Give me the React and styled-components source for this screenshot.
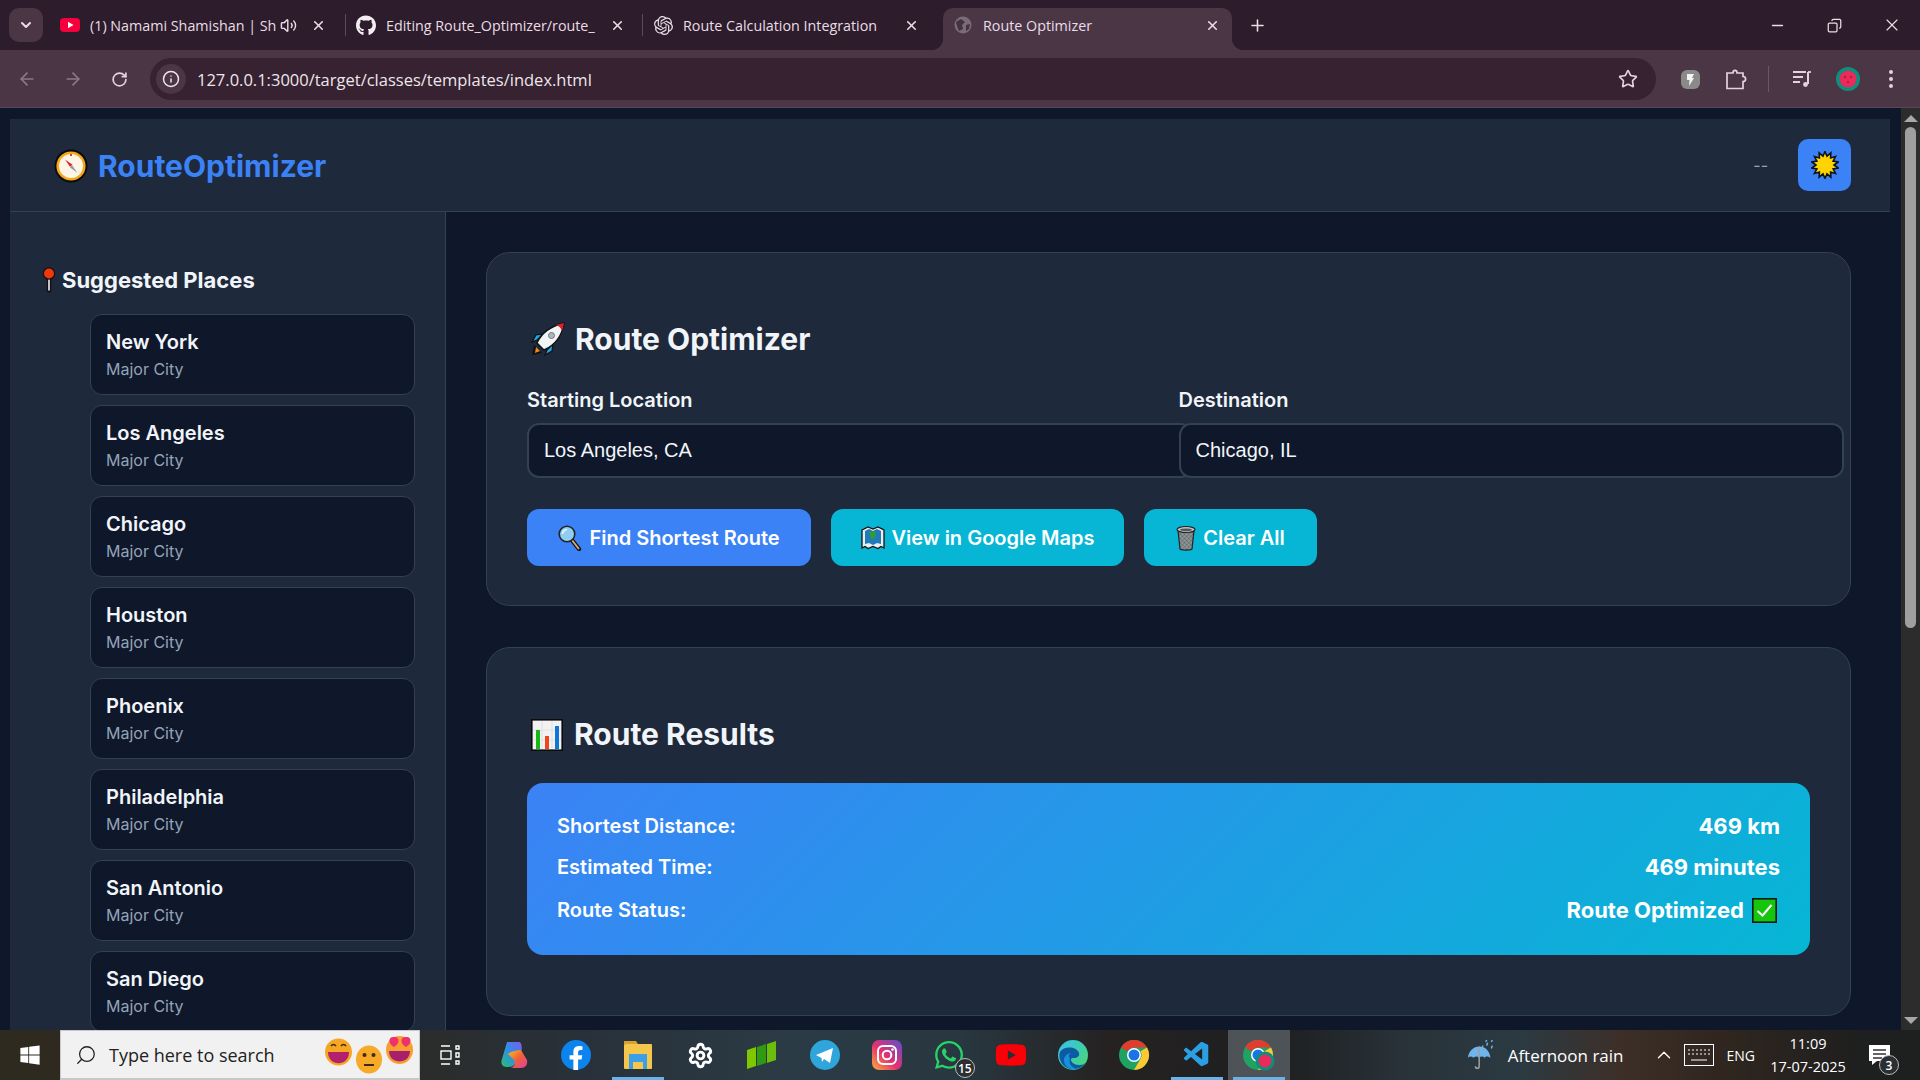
import React from 'react';
import styled, { createGlobalStyle } from 'styled-components';
import { ArrowLeft, ArrowRight, RotateCw, Info, Star, X, Plus, Minus, Copy, ChevronDown, ChevronUp, Volume2, Search, Settings } from 'lucide-react';
import { FaGithub, FaFacebookF, FaWhatsapp, FaWindows, FaYoutube } from 'react-icons/fa';
import { SiOpenai } from 'react-icons/si';
import { VscVscode } from 'react-icons/vsc';

const GlobalStyle = createGlobalStyle`
  * { box-sizing: border-box; }
  html, body { margin: 0; padding: 0; overflow: hidden; background: #0f172a; }
  body { font-family: Inter, "Liberation Sans", sans-serif; }
`;

const Shell = styled.div`
  width: 1920px;
  height: 1080px;
  display: flex;
  flex-direction: column;
  overflow: hidden;
`;

/* browser chrome */
const TabStrip = styled.div`
  height: 50px;
  background: #2d1c2b;
  display: flex;
  align-items: flex-end;
  padding-left: 9px;
  color: #e9dde6;
  font-family: "Open Sans", "Noto Sans", sans-serif;
  font-size: 14.3px;
`;

const TabMenu = styled.div`
  width: 34px;
  height: 34px;
  margin-bottom: 8px;
  margin-right: 7px;
  border-radius: 10px;
  background: #4b3646;
  display: flex;
  align-items: center;
  justify-content: center;
`;

const Tab = styled.div`
  width: ${p => p.$w}px;
  height: 42px;
  display: flex;
  align-items: center;
  padding: 0 ${p => p.$pr}px 8px 10px;
  position: relative;
  flex-shrink: 0;
  border-radius: 10px 10px 0 0;
  background: ${p => (p.$active ? '#4b3646' : 'transparent')};
  ${p => p.$sep && `
    &::after {
      content: '';
      position: absolute;
      right: 0;
      top: 6px;
      height: 22px;
      width: 1px;
      background: #5d4a59;
    }
  `}
  ${p => p.$active && `
    &::before, &::after {
      content: '';
      position: absolute;
      bottom: 0;
      width: 12px;
      height: 12px;
    }
    &::before { left: -12px; background: radial-gradient(circle at 0 0, transparent 12px, #4b3646 12.5px); }
    &::after { right: -12px; background: radial-gradient(circle at 100% 0, transparent 12px, #4b3646 12.5px); }
  `}
`;

const TabIcon = styled.span`
  width: 20px;
  height: 20px;
  margin-right: 10px;
  flex-shrink: 0;
  display: flex;
  align-items: center;
  justify-content: center;
`;

const TabTitle = styled.span`
  flex: 1;
  white-space: nowrap;
  min-width: 0;
`;

const TabAudio = styled(Volume2)`
  margin-left: 4px;
  flex-shrink: 0;
`;

const TabClose = styled(X)`
  margin-left: 14px;
  flex-shrink: 0;
`;

const NewTab = styled.div`
  margin: 0 0 8px 16px;
  height: 34px;
  display: flex;
  align-items: center;
`;

const WindowControls = styled.div`
  margin-left: auto;
  height: 50px;
  display: flex;
  align-items: center;
`;

const WinButton = styled.div`
  width: 57px;
  display: flex;
  justify-content: center;
`;

const RestoreIcon = styled(Copy)`
  transform: scaleX(-1);
`;

const Toolbar = styled.div`
  height: 58px;
  background: #4b3646;
  display: flex;
  align-items: center;
  padding-left: 4px;
  color: #bfb0bb;
  box-shadow: inset 0 -1px 0 #5a4654;
`;

const NavButton = styled.div`
  width: 46px;
  display: flex;
  justify-content: center;
  opacity: ${p => (p.$dim ? 0.55 : 1)};
  color: ${p => (p.$dim ? 'inherit' : '#e3d3de')};
`;

const Omnibox = styled.div`
  width: 1506px;
  height: 42px;
  flex-shrink: 0;
  margin-left: 8px;
  border-radius: 21px;
  background: #362230;
  display: flex;
  align-items: center;
  padding: 0 18px 0 6px;
  color: #efe6ec;
  font-family: "Open Sans", "Noto Sans", sans-serif;
  font-size: 16.5px;
`;

const InfoBubble = styled.div`
  width: 30px;
  height: 30px;
  border-radius: 50%;
  background: #4b3646;
  margin-right: 11px;
  display: flex;
  align-items: center;
  justify-content: center;
`;

const Url = styled.span`
  flex: 1;
`;

const ToolbarIcons = styled.div`
  display: flex;
  align-items: center;
  color: #e3d3de;
`;

const ToolSlot = styled.div`
  width: ${p => p.$w}px;
  display: flex;
  justify-content: center;
  flex-shrink: 0;
`;

const ToolDivider = styled.div`
  width: 1px;
  height: 26px;
  background: #6a5865;
`;

/* page */
const Viewport = styled.div`
  flex: 1;
  min-height: 0;
  display: flex;
`;

const Page = styled.div`
  width: 1901px;
  padding: 11px 11px 0 10px;
  background: #0f172a;
  display: flex;
  flex-direction: column;
  overflow: hidden;
`;

const Scrollbar = styled.div`
  width: 19px;
  background: #2c2c2c;
  display: flex;
  flex-direction: column;
  align-items: center;
  padding-top: 7px;
`;

const ScrollUp = styled.div`
  width: 0;
  height: 0;
  border-left: 7px solid transparent;
  border-right: 7px solid transparent;
  border-bottom: 7px solid #a8a8a8;
`;

const ScrollDown = styled(ScrollUp)`
  margin-top: auto;
  margin-bottom: 6px;
  border-bottom: 0;
  border-top: 7px solid #a8a8a8;
`;

const ScrollThumb = styled.div`
  width: 11px;
  height: 501px;
  margin-top: 5px;
  border-radius: 6px;
  background: #9f9f9f;
`;

const Header = styled.header`
  height: 93px;
  flex-shrink: 0;
  background: #1e293b;
  border-bottom: 1px solid #334155;
  display: flex;
  align-items: center;
  padding: 0 39px 0 44px;
`;

const Logo = styled.h1`
  margin: 0;
  padding-top: 2px;
  font-size: 30px;
  font-weight: 700;
  color: #3b82f6;
  display: flex;
  align-items: center;
  gap: 10px;
`;

const HeaderRight = styled.div`
  margin-left: auto;
  display: flex;
  align-items: center;
  gap: 30px;
`;

const Ping = styled.span`
  color: #94a3b8;
  font-size: 16px;
`;

const ThemeToggle = styled.button`
  width: 53px;
  height: 52px;
  border: 0;
  border-radius: 10px;
  background: #3b82f6;
  display: flex;
  align-items: center;
  justify-content: center;
  padding: 0;
`;

const Layout = styled.div`
  flex: 1;
  min-height: 0;
  display: flex;
`;

const Sidebar = styled.aside`
  width: 436px;
  flex-shrink: 0;
  background: #1e293b;
  border-right: 1px solid #334155;
  padding: 51px 30px 0 32px;
`;

const SideTitle = styled.h3`
  margin: 0 0 17px;
  font-size: 22px;
  line-height: 34px;
  font-weight: 700;
  color: #f1f5f9;
  display: flex;
  align-items: center;
  gap: 6px;
`;

const PlaceList = styled.ul`
  list-style: none;
  margin: 0;
  padding: 0 0 0 48px;
  display: flex;
  flex-direction: column;
  gap: 10px;
`;

const PlaceCard = styled.li`
  height: 81px;
  padding: 15px;
  border: 1px solid #334155;
  border-radius: 12px;
  background: #0f172a;
`;

const PlaceName = styled.div`
  font-size: 20px;
  line-height: 24px;
  font-weight: 600;
  color: #f1f5f9;
`;

const PlaceKind = styled.div`
  margin-top: 5px;
  font-size: 16px;
  line-height: 20px;
  color: #94a3b8;
`;

const Main = styled.main`
  flex: 1;
  min-width: 0;
  padding: 40px 39px 0 40px;
  display: flex;
  flex-direction: column;
  gap: 41px;
`;

const Card = styled.section`
  flex-shrink: 0;
  height: ${p => p.$h}px;
  padding: 40px;
  background: #1e293b;
  border: 1px solid #334155;
  border-radius: 24px;
`;

const CardTitle = styled.h2`
  margin: ${p => p.$mt}px 0 ${p => p.$mb}px;
  font-size: 30px;
  line-height: 39px;
  font-weight: 700;
  color: #f1f5f9;
  display: flex;
  align-items: center;
  gap: ${p => p.$gap}px;
  svg { margin-left: ${p => p.$inset}px; }
`;

const FormGrid = styled.div`
  display: grid;
  grid-template-columns: 1fr 1fr;
  gap: 20px;
  margin-bottom: 31px;
`;

const Field = styled.div`
  min-width: 0;
`;

const Label = styled.label`
  display: block;
  margin-bottom: 11px;
  font-size: 20px;
  line-height: 23px;
  font-weight: 600;
  color: #f1f5f9;
`;

const Input = styled.input`
  display: block;
  box-sizing: content-box;
  width: 100%;
  height: 21px;
  padding: 15px;
  border: 2px solid #334155;
  border-radius: 12px;
  background: #0f172a;
  color: #f1f5f9;
  font-family: "Liberation Sans", Arial, sans-serif;
  font-size: 20px;
  position: relative;
`;

const ButtonRow = styled.div`
  display: flex;
  gap: 20px;
`;

const Button = styled.button`
  width: ${p => p.$w}px;
  height: 57px;
  border: 0;
  border-radius: 12px;
  background: ${p => (p.$primary ? '#3b82f6' : '#06b6d4')};
  color: #fff;
  font-family: inherit;
  font-size: 20px;
  font-weight: 600;
  display: flex;
  align-items: center;
  justify-content: center;
  gap: 7px;
  padding: 0;
`;

const ResultPanel = styled.div`
  height: 172px;
  padding: 24px 30px 0;
  border-radius: 16px;
  background: linear-gradient(135deg, #3b82f6, #06b6d4);
  color: #fff;
`;

const ResultRow = styled.div`
  height: ${p => p.$h}px;
  display: flex;
  align-items: center;
  justify-content: space-between;
`;

const ResultLabel = styled.span`
  font-size: 20px;
  font-weight: 600;
`;

const ResultValue = styled.span`
  font-size: 22px;
  font-weight: 700;
  display: flex;
  align-items: center;
  gap: 8px;
  svg { margin-right: 3px; }
`;

/* windows taskbar */
const Taskbar = styled.footer`
  height: 50px;
  flex-shrink: 0;
  display: flex;
  align-items: center;
  color: #fff;
  font-family: "Open Sans", "Noto Sans", sans-serif;
  background: linear-gradient(90deg, #2e2a1f 0, #2d2a22 320px, #283038 560px, #2b3b45 800px, #283740 960px, #252221 1110px, #1e1f20 1280px, #283238 1400px, #2b3a42 1520px, #3d2f28 1620px, #30261f 1720px, #1e1f1f 1860px);
`;

const StartSlot = styled.div`
  width: 60px;
  display: flex;
  justify-content: center;
`;

const SearchBox = styled.div`
  width: 360px;
  height: 50px;
  flex-shrink: 0;
  background: #f1f1f1;
  border: 1px solid #c8c8c8;
  border-bottom-width: 2px;
  display: flex;
  align-items: center;
  padding: 0 4px 0 14px;
  color: #222;
  font-size: 18px;
  gap: 12px;
`;

const SearchHint = styled.span`
  flex: 1;
  white-space: nowrap;
`;

const SearchGlass = styled(Search)`
  transform: scaleX(-1);
`;

const TaskView = styled.div`
  width: 63px;
  padding-right: 3px;
  display: flex;
  justify-content: center;
  flex-shrink: 0;
`;

const TaskSlot = styled.div`
  width: 62.1px;
  height: 50px;
  flex-shrink: 0;
  display: flex;
  align-items: center;
  justify-content: center;
  position: relative;
  background: ${p => (p.$active ? '#4d5357' : 'transparent')};
  ${p => p.$open && `
    &::after {
      content: '';
      position: absolute;
      left: 5px;
      right: 5px;
      bottom: 0;
      height: 3px;
      background: #6cb2e8;
    }
  `}
`;

const CountBadge = styled.span`
  position: absolute;
  right: 5px;
  bottom: 2px;
  width: 20px;
  height: 20px;
  border-radius: 50%;
  border: 1px solid #bbb;
  background: #2a2f33;
  font-size: 12px;
  font-weight: 600;
  display: flex;
  align-items: center;
  justify-content: center;
`;

const Tray = styled.div`
  margin-left: auto;
  display: flex;
  align-items: center;
  height: 50px;
`;

const Weather = styled.div`
  display: flex;
  align-items: center;
  gap: 11px;
  font-size: 17px;
  margin-right: 29px;
  white-space: nowrap;
`;

const TrayChevron = styled(ChevronUp)`
  margin-right: 9px;
`;

const Lang = styled.span`
  font-size: 14px;
  margin: 0 11px 0 13px;
`;

const Clock = styled.div`
  width: 84px;
  text-align: center;
  font-size: 14.5px;
  line-height: 23px;
`;

const NotifySlot = styled.div`
  width: 70px;
  height: 50px;
  padding-left: 19px;
  display: flex;
  align-items: center;
  position: relative;
`;

const NotifyBadge = styled(CountBadge)`
  left: 29px;
  right: auto;
  bottom: 5px;
`;

const FacebookDisc = styled.span`
  width: 30px;
  height: 30px;
  border-radius: 50%;
  background: #0b84ee;
  display: flex;
  align-items: flex-end;
  justify-content: center;
`;

/* drawings */
const sunPoints = Array.from({ length: 28 }, (_, i) => {
  const a = (i * Math.PI) / 14;
  const r = i % 2 ? 9 : 13.5;
  return `${14 + r * Math.sin(a)},${14 - r * Math.cos(a)}`;
}).join(' ');

const SunIcon = () => (
  <svg width="28" height="28" viewBox="0 0 28 28">
    <polygon points={sunPoints} fill="#ffd400" stroke="#10131c" strokeWidth="1.6" />
  </svg>
);

const CompassIcon = () => (
  <svg width="34" height="34" viewBox="0 0 34 34">
    <circle cx="17" cy="17" r="16.5" fill="#0a0a0a" />
    <circle cx="17" cy="17" r="14.6" fill="#f6a81c" />
    <circle cx="17" cy="17" r="12" fill="#fdf6e6" />
    <rect x="16" y="5" width="2" height="2" fill="#e33" />
    <path d="M11 10.500L18.500 15.800L16 17.800Z" fill="#d9212c" />
    <path d="M23.500 24L15.800 18.200L18 16Z" fill="#9a9a9a" />
  </svg>
);

const PinIcon = () => (
  <svg width="14" height="26" viewBox="0 0 14 26">
    <rect x="4.8" y="8" width="4.4" height="17.5" rx="1.6" fill="#111" />
    <rect x="6.1" y="10" width="1.8" height="13.5" fill="#d8d8d8" />
    <circle cx="7" cy="6.5" r="6.2" fill="#111" />
    <circle cx="7" cy="6.5" r="5" fill="#f0380f" />
  </svg>
);

const RocketIcon = () => (
  <svg width="36" height="36" viewBox="0 0 36 36">
    <path d="M3 33L5 23L13 31Z" fill="#111" />
    <path d="M6 31L7 25L11 29Z" fill="#f7861b" />
    <path d="M8 18L3 20L7 13L14 12Z" fill="#1da7e4" stroke="#111" strokeWidth="1.2" />
    <path d="M18 28L16 33L23 29L24 22Z" fill="#1da7e4" stroke="#111" strokeWidth="1.2" />
    <path d="M8 21C13 10 22 4 35 1C33 14 26 23 15 28Z" fill="#f2f5f8" stroke="#111" strokeWidth="1.4" />
    <path d="M27 3L35 1L33 9C32 6 30 4 27 3Z" fill="#e3202e" />
    <circle cx="22.5" cy="13.5" r="3" fill="#aeb6bd" stroke="#777" />
  </svg>
);

const ChartIcon = () => (
  <svg width="32" height="32" viewBox="0 0 32 32">
    <rect x="0.8" y="0.8" width="30.4" height="30.4" fill="#f2f2f2" stroke="#0b0b0b" strokeWidth="1.6" />
    <path d="M11 2V30M21 2V30M2 11H30M2 21H30" stroke="#e0e0e0" strokeWidth="1" />
    <rect x="5" y="11" width="4" height="19" fill="#16b816" />
    <rect x="14" y="17" width="4" height="13" fill="#f0431f" />
    <rect x="24" y="7" width="4" height="23" fill="#0f75d8" />
  </svg>
);

const MagnifierIcon = () => (
  <svg width="24" height="26" viewBox="0 0 24 26">
    <path d="M13 14L21 24" stroke="#111" strokeWidth="4.4" strokeLinecap="round" />
    <path d="M13.5 14.5L20.5 23.5" stroke="#d9a86c" strokeWidth="2" strokeLinecap="round" />
    <circle cx="9" cy="9" r="7.8" fill="#8fcdf1" stroke="#222" strokeWidth="1.6" />
    <path d="M4.5 9A4.5 4.5 0 0 1 9 4.5" stroke="#eaf7ff" strokeWidth="1.6" fill="none" />
  </svg>
);

const MapIcon = () => (
  <svg width="24" height="25" viewBox="0 0 24 25">
    <path d="M1 5L7 2L12 4L17 2L23 5V23L20 21.5L17 23.5L12 21.5L7 23.5L4 21.5L1 23Z" fill="#e9eef0" stroke="#111" strokeWidth="1.3" />
    <path d="M4 6L8 4L12 6L16 4L20 6V19L16 18L12 20L8 18L4 19Z" fill="#2079b8" />
    <path d="M8 7L14 6L15 11L11 15L9 11Z" fill="#2d9b3a" />
  </svg>
);

const TrashIcon = () => (
  <svg width="20" height="26" viewBox="0 0 20 26">
    <defs>
      <pattern id="mesh" width="3" height="3" patternUnits="userSpaceOnUse" patternTransform="rotate(45)">
        <rect width="3" height="3" fill="#8f9699" />
        <path d="M0 0H3M0 0V3" stroke="#4e5456" strokeWidth="0.8" />
      </pattern>
    </defs>
    <path d="M2 5L4 24C4.5 25.4 15.5 25.4 16 24L18 5Z" fill="url(#mesh)" stroke="#222" strokeWidth="1.2" />
    <ellipse cx="10" cy="4.5" rx="9" ry="3" fill="#bfc5c8" stroke="#222" strokeWidth="1.2" />
    <ellipse cx="10" cy="4.8" rx="6" ry="1.4" fill="#555" />
  </svg>
);

const CheckIcon = () => (
  <svg width="25" height="25" viewBox="0 0 25 25">
    <rect x="0.8" y="0.8" width="23.4" height="23.4" fill="#16c60c" stroke="#0b1a1a" strokeWidth="1.6" />
    <path d="M5.5 13L10.5 17.5L19.5 7" fill="none" stroke="#fff" strokeWidth="2" />
  </svg>
);

const Globe = () => (
  <svg width="18" height="18" viewBox="0 0 18 18">
    <circle cx="9" cy="9" r="8.5" fill="#7b6a77" />
    <path d="M2 6L7 3L11 6L8 9L9 13L5 15L3 10Z M12 9L16 8L15 13L12 15Z" fill="#43323f" />
  </svg>
);

const YoutubeTabIcon = () => (
  <svg width="20" height="20" viewBox="0 0 20 20">
    <rect y="3" width="20" height="14" rx="4" fill="#f5003c" />
    <path d="M8 6.8L13.5 10L8 13.2Z" fill="#fff" />
  </svg>
);

const ExtensionIcon = () => (
  <svg width="19" height="19" viewBox="0 0 19 19">
    <rect width="19" height="19" rx="6" fill="#8a8a8a" />
    <path d="M6 4H13L11 8H13L8 16L8.500 10H6Z" fill="#f4f4f4" />
  </svg>
);

const PuzzleIcon = () => (
  <svg width="22" height="22" viewBox="0 0 22 22" fill="none" stroke="#e3d3de" strokeWidth="1.7">
    <path d="M2 5H8C8 1.500 12 1.500 12 5H18V8.500C21.500 8.500 21.500 13.500 18 13.500V20.500H2Z" />
  </svg>
);

const MusicIcon = () => (
  <svg width="20" height="20" viewBox="0 0 20 20" fill="none" stroke="#e3d3de" strokeWidth="1.8">
    <path d="M1 3H14M1 8H11M1 13H8" />
    <path d="M16 3V15" strokeWidth="2" />
    <circle cx="13.5" cy="15.5" r="2.4" fill="#e3d3de" stroke="none" />
    <path d="M16 3H19" />
  </svg>
);

const Avatar = ({ size = 24 }) => (
  <svg width={size} height={size} viewBox="0 0 24 24">
    <circle cx="12" cy="12" r="12" fill="#0c8f7d" />
    <circle cx="12" cy="12" r="8.6" fill="#e92a5b" />
    <circle cx="9" cy="10" r=".8" fill="#611" />
    <circle cx="15" cy="10" r=".8" fill="#611" />
    <circle cx="12" cy="15" r=".8" fill="#611" />
  </svg>
);

const Dots = () => (
  <svg width="6" height="20" viewBox="0 0 6 20">
    <circle cx="3" cy="3" r="2" fill="#e3d3de" />
    <circle cx="3" cy="10" r="2" fill="#e3d3de" />
    <circle cx="3" cy="17" r="2" fill="#e3d3de" />
  </svg>
);

const SearchEmojis = () => (
  <svg width="92" height="40" viewBox="0 0 92 40">
    <ellipse cx="15.500" cy="17" rx="13.500" ry="13.500" fill="#f5a623" />
    <path d="M5 17H26C26 32 5 32 5 17Z" fill="#b3206e" />
    <path d="M8 11Q10.500 8 13 11M18 11Q20.500 8 23 11" stroke="#3b2a1e" strokeWidth="1.6" fill="none" />
    <ellipse cx="46" cy="24.500" rx="13" ry="14" fill="#f7a928" />
    <circle cx="41.500" cy="20" r="2" fill="#3b2a1e" />
    <circle cx="50.500" cy="20" r="2" fill="#3b2a1e" />
    <rect x="41" y="29" width="10" height="2" fill="#3b2a1e" />
    <ellipse cx="76.500" cy="15" rx="13.500" ry="14" fill="#f7a030" />
    <path d="M66 16H87C87 30 66 30 66 16Z" fill="#a81f6e" />
    <path d="M71 12C64 8 66 1 71 2C76 1 78 8 71 12ZM83 12C76 8 78 1 83 2C88 1 90 8 83 12Z" fill="#f0306a" />
  </svg>
);

const Copilot = () => (
  <svg width="28" height="30" viewBox="0 0 28 30">
    <defs>
      <linearGradient id="cpA" x1="0" y1="1" x2="1" y2="0">
        <stop offset="0" stopColor="#28c06b" />
        <stop offset=".5" stopColor="#2f8fe8" />
        <stop offset="1" stopColor="#7b5cf0" />
      </linearGradient>
      <linearGradient id="cpB" x1="0" y1="0" x2="1" y2="1">
        <stop offset="0" stopColor="#f8c21c" />
        <stop offset=".5" stopColor="#f0603a" />
        <stop offset="1" stopColor="#e040a0" />
      </linearGradient>
    </defs>
    <path d="M7 2H19C22 2 23 10 20 14L15 24C13 27 10 27 6 27C3 27 0 24 2 19Z" fill="url(#cpA)" />
    <path d="M8 14C10 12 17 10 21 10L27 20C28 25 25 28 21 28H11C14 27 16 24 14 20Z" fill="url(#cpB)" />
  </svg>
);

const Explorer = () => (
  <svg width="30" height="30" viewBox="0 0 30 30">
    <path d="M1 1H13L15 4H1Z" fill="#d9a22a" />
    <rect x="1" y="4" width="28" height="25" rx="1" fill="#f4c64b" />
    <rect x="6" y="14" width="18" height="15" fill="#3a9fe6" />
    <rect x="10" y="22" width="10" height="7" fill="#f4c64b" />
  </svg>
);

const MinecraftBars = () => (
  <svg width="32" height="30" viewBox="0 0 32 30">
    <path d="M1 10L10 7V26L1 29Z" fill="#7fc800" />
    <path d="M11 7L20 4V23L11 26Z" fill="#2f9a12" />
    <path d="M21 4L30 1V20L21 23Z" fill="#6bbf0a" />
  </svg>
);

const InstagramTile = () => (
  <svg width="30" height="30" viewBox="0 0 30 30">
    <defs>
      <linearGradient id="ig" x1="0" y1="1" x2="1" y2="0">
        <stop offset="0" stopColor="#fbb03b" />
        <stop offset=".45" stopColor="#e6306e" />
        <stop offset="1" stopColor="#5a4fcf" />
      </linearGradient>
    </defs>
    <rect width="30" height="30" rx="7" fill="url(#ig)" />
    <rect x="6" y="6" width="18" height="18" rx="5" fill="none" stroke="#fff" strokeWidth="2" />
    <circle cx="15" cy="15" r="4.3" fill="none" stroke="#fff" strokeWidth="2" />
    <circle cx="20.500" cy="9.500" r="1.300" fill="#fff" />
  </svg>
);

const TelegramTile = () => (
  <svg width="30" height="30" viewBox="0 0 30 30">
    <circle cx="15" cy="15" r="15" fill="#2ea6dc" />
    <path d="M6 15L23 8L20 23L14 19L12 22L11.500 18Z" fill="#fff" />
  </svg>
);

const Edge = () => (
  <svg width="30" height="30" viewBox="0 0 30 30">
    <defs>
      <linearGradient id="edgeA" x1="0" y1="0" x2="1" y2="1">
        <stop offset="0" stopColor="#35c1f1" />
        <stop offset="1" stopColor="#4ad86a" />
      </linearGradient>
    </defs>
    <circle cx="15" cy="15" r="15" fill="url(#edgeA)" />
    <path d="M2 12C6 6 18 6 21 13C22 17 18 18 15 18C11 18 13 25 21 25C25 25 26 24 27 23C23 31 8 32 3 22C1 18 1 15 2 12Z" fill="#0c59a4" />
    <path d="M12 19C10 24 15 29 20 29C13 31 6 27 6 20C6 16 10 13 13 13C10 15 11 17 12 19Z" fill="#1a8fdc" />
  </svg>
);

const ChromeLogo = ({ badge }) => (
  <svg width="32" height="32" viewBox="0 0 32 32">
    <circle cx="15" cy="16" r="15" fill="#1ea362" />
    <path d="M15 1A15 15 0 0 1 28 8.500H15A7.500 7.500 0 0 0 8.500 12.200L2 8.500A15 15 0 0 1 15 1Z" fill="#e33b2e" />
    <path d="M28 8.500A15 15 0 0 1 15 31L21.500 19.800A7.500 7.500 0 0 0 21.500 12.200L28 8.500Z" fill="#fcc934" />
    <circle cx="15" cy="16" r="7" fill="#fff" />
    <circle cx="15" cy="16" r="5.500" fill="#1a73e8" />
    {badge && <circle cx="22" cy="22" r="9.500" fill="#0c8f7d" />}
    {badge && <circle cx="22" cy="22" r="6.500" fill="#e92a5b" />}
  </svg>
);

const WeatherIcon = () => (
  <svg width="30" height="32" viewBox="0 0 32 34">
    <path d="M1 20C2 11 9 8 13 8C19 8 24 12 25 20C22 18 20 18 19 20C17 18 15 18 13 20C11 18 9 18 7 20C5 18 3 18 1 20Z" fill="#6fb4ea" />
    <path d="M13 8V29C13 32 9 32 9 29" fill="none" stroke="#9aa0a4" strokeWidth="1.6" />
    <path d="M17 7L16 10M22 4L21 7M27 7L26 10M21 1L20 3M27 1L26 3" stroke="#6fb4ea" strokeWidth="1.6" />
  </svg>
);

const KeyboardIcon = () => (
  <svg width="30" height="22" viewBox="0 0 30 22" fill="none" stroke="#fff">
    <rect x=".5" y=".5" width="29" height="21" />
    <path d="M4 6H26M4 10H26" strokeDasharray="2 2" />
    <path d="M7 16H23" />
  </svg>
);

const NotifyIcon = () => (
  <svg width="21" height="20" viewBox="0 0 21 20">
    <path d="M0 0H21V16H8L3 20V16H0Z" fill="#fff" />
    <path d="M4 5H17M4 9H17M4 13H13" stroke="#333" strokeWidth="1.4" />
  </svg>
);

const TaskViewIcon = () => (
  <svg width="20" height="20" viewBox="0 0 20 20" fill="none" stroke="#fff" strokeWidth="1.4">
    <path d="M1 1H10M1 19H10" />
    <rect x="1" y="6" width="10" height="8" />
    <path d="M16 1H19V4H16ZM16 8H19V12H16ZM16 16H19V19H16Z" />
  </svg>
);

const places = ['New York', 'Los Angeles', 'Chicago', 'Houston', 'Phoenix', 'Philadelphia', 'San Antonio', 'San Diego'];

const tabs = [
  { title: '(1) Namami Shamishan | Sh', w: 296, icon: <YoutubeTabIcon />, audio: true, sep: true, pr: 20 },
  { title: 'Editing Route_Optimizer/route_', w: 297, icon: <FaGithub size={21} color="#f4eef2" />, sep: true, pr: 18 },
  { title: 'Route Calculation Integration', w: 300, icon: <SiOpenai size={19} color="#e9dde6" />, pr: 24 },
  { title: 'Route Optimizer', w: 289, icon: <Globe />, active: true, pr: 12 },
];

const taskApps = [
  { key: 'copilot', node: <Copilot /> },
  { key: 'facebook', node: <FacebookDisc><FaFacebookF size={24} color="#fff" /></FacebookDisc> },
  { key: 'explorer', node: <Explorer />, open: true },
  { key: 'settings', node: <Settings size={27} color="#fff" strokeWidth={2.6} /> },
  { key: 'bars', node: <MinecraftBars /> },
  { key: 'telegram', node: <TelegramTile /> },
  { key: 'instagram', node: <InstagramTile /> },
  { key: 'whatsapp', node: <FaWhatsapp size={32} color="#25d366" />, badge: '15' },
  { key: 'youtube', node: <FaYoutube size={32} color="#fb0007" /> },
  { key: 'edge', node: <Edge /> },
  { key: 'chrome', node: <ChromeLogo /> },
  { key: 'vscode', node: <VscVscode size={30} color="#2a9fe4" />, open: true },
  { key: 'chrome2', node: <ChromeLogo badge />, open: true, active: true },
];

export default function App() {
  return (
    <Shell>
      <GlobalStyle />
      <TabStrip>
        <TabMenu><ChevronDown size={16} strokeWidth={3} /></TabMenu>
        {tabs.map(tab => (
          <Tab key={tab.title} $w={tab.w} $pr={tab.pr} $sep={tab.sep} $active={tab.active}>
            <TabIcon>{tab.icon}</TabIcon>
            <TabTitle>{tab.title}</TabTitle>
            {tab.audio && <TabAudio size={17} />}
            <TabClose size={15} strokeWidth={2.6} />
          </Tab>
        ))}
        <NewTab><Plus size={19} /></NewTab>
        <WindowControls>
          <WinButton><Minus size={17} /></WinButton>
          <WinButton><RestoreIcon size={15} /></WinButton>
          <WinButton><X size={20} strokeWidth={1.4} /></WinButton>
        </WindowControls>
      </TabStrip>

      <Toolbar>
        <NavButton $dim><ArrowLeft size={20} /></NavButton>
        <NavButton $dim><ArrowRight size={20} /></NavButton>
        <NavButton><RotateCw size={17} strokeWidth={2.4} /></NavButton>
        <Omnibox>
          <InfoBubble><Info size={18} /></InfoBubble>
          <Url>127.0.0.1:3000/target/classes/templates/index.html</Url>
          <Star size={20} color="#e3d3de" strokeWidth={2} />
        </Omnibox>
        <ToolbarIcons>
          <ToolSlot $w={68}><ExtensionIcon /></ToolSlot>
          <ToolSlot $w={24}><PuzzleIcon /></ToolSlot>
          <ToolSlot $w={20} />
          <ToolDivider />
          <ToolSlot $w={66}><MusicIcon /></ToolSlot>
          <ToolSlot $w={26}><Avatar /></ToolSlot>
          <ToolSlot $w={59}><Dots /></ToolSlot>
        </ToolbarIcons>
      </Toolbar>

      <Viewport>
        <Page>
          <Header>
            <Logo><CompassIcon />RouteOptimizer</Logo>
            <HeaderRight>
              <Ping>--</Ping>
              <ThemeToggle aria-label="theme"><SunIcon /></ThemeToggle>
            </HeaderRight>
          </Header>
          <Layout>
            <Sidebar>
              <SideTitle><PinIcon />Suggested Places</SideTitle>
              <PlaceList>
                {places.map(name => (
                  <PlaceCard key={name}>
                    <PlaceName>{name}</PlaceName>
                    <PlaceKind>Major City</PlaceKind>
                  </PlaceCard>
                ))}
              </PlaceList>
            </Sidebar>
            <Main>
              <Card $h={354}>
                <CardTitle $mt={27} $mb={30} $inset={2} $gap={10}><RocketIcon />Route Optimizer</CardTitle>
                <FormGrid>
                  <Field>
                    <Label>Starting Location</Label>
                    <Input defaultValue="Los Angeles, CA" />
                  </Field>
                  <Field>
                    <Label>Destination</Label>
                    <Input defaultValue="Chicago, IL" />
                  </Field>
                </FormGrid>
                <ButtonRow>
                  <Button $primary $w={284}><MagnifierIcon />Find Shortest Route</Button>
                  <Button $w={293}><MapIcon />View in Google Maps</Button>
                  <Button $w={173}><TrashIcon />Clear All</Button>
                </ButtonRow>
              </Card>
              <Card $h={369}>
                <CardTitle $mt={27} $mb={29} $inset={4} $gap={11}><ChartIcon />Route Results</CardTitle>
                <ResultPanel>
                  <ResultRow $h={38}><ResultLabel>Shortest Distance:</ResultLabel><ResultValue>469 km</ResultValue></ResultRow>
                  <ResultRow $h={44}><ResultLabel>Estimated Time:</ResultLabel><ResultValue>469 minutes</ResultValue></ResultRow>
                  <ResultRow $h={42}><ResultLabel>Route Status:</ResultLabel><ResultValue>Route Optimized <CheckIcon /></ResultValue></ResultRow>
                </ResultPanel>
              </Card>
            </Main>
          </Layout>
        </Page>
        <Scrollbar>
          <ScrollUp />
          <ScrollThumb />
          <ScrollDown />
        </Scrollbar>
      </Viewport>

      <Taskbar>
        <StartSlot><FaWindows size={22} /></StartSlot>
        <SearchBox>
          <SearchGlass size={22} strokeWidth={1.4} />
          <SearchHint>Type here to search</SearchHint>
          <SearchEmojis />
        </SearchBox>
        <TaskView><TaskViewIcon /></TaskView>
        {taskApps.map(app => (
          <TaskSlot key={app.key} $open={app.open} $active={app.active}>
            {app.node}
            {app.badge && <CountBadge>{app.badge}</CountBadge>}
          </TaskSlot>
        ))}
        <Tray>
          <Weather><WeatherIcon />Afternoon rain</Weather>
          <TrayChevron size={22} strokeWidth={1.5} />
          <KeyboardIcon />
          <Lang>ENG</Lang>
          <Clock>
            <div>11:09</div>
            <div>17-07-2025</div>
          </Clock>
          <NotifySlot>
            <NotifyIcon />
            <NotifyBadge>3</NotifyBadge>
          </NotifySlot>
        </Tray>
      </Taskbar>
    </Shell>
  );
}
